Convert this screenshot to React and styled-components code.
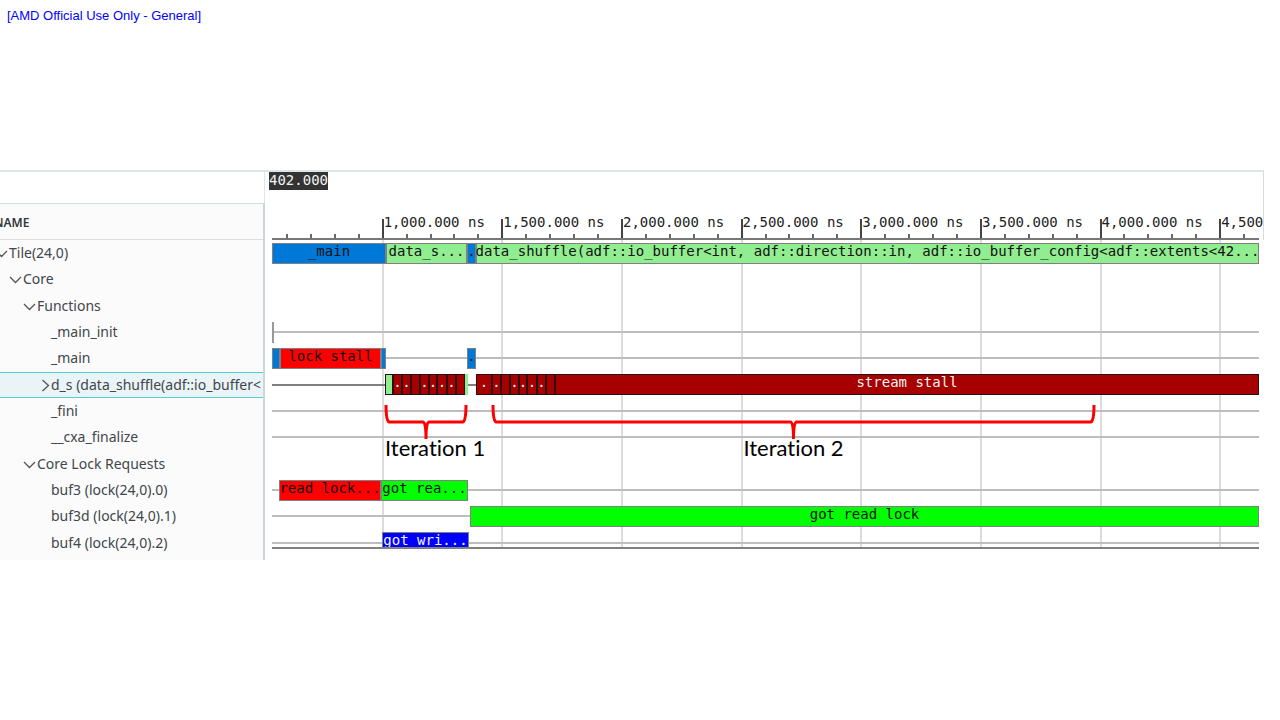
import React from "react";
import styled, { createGlobalStyle } from "styled-components";

const GlobalStyle = createGlobalStyle`
  *, *::before, *::after { box-sizing: border-box; }
  body {
    margin: 0;
    background: #fff;
    font-family: "Noto Sans", "Open Sans", sans-serif;
    color: #41464b;
  }
`;

const mono = `"DejaVu Sans Mono", "Liberation Mono", monospace`;

const colors = {
  blue: "#0078d7",
  mint: "#90ee90",
  red: "#ff0000",
  dark: "#a60000",
  green: "#00ff00",
  navy: "#0000ff",
  gray: "#999999",
};

const Page = styled.div`
  padding-right: 16px;
`;

const Notice = styled.p`
  margin: 0;
  padding: 8px 7px 0;
  height: 170px;
  font: 13px/16px "Liberation Sans", Arial, sans-serif;
  color: #0000ff;
`;

const Panel = styled.main`
  display: flex;
  overflow: hidden;
  border-top: 2px solid #dfe4e8;
`;

const Sidebar = styled.aside`
  flex: 0 0 265px;
  display: flex;
  flex-direction: column;
`;

const SidebarTop = styled.div`
  height: 31px;
  border-right: 1px solid #dfe4e8;
`;

const TreePane = styled.div`
  flex: 1;
  overflow: hidden;
  padding-bottom: 4px;
  border-top: 1px solid #d5dce1;
  border-right: 2px solid #cdd4da;
  background: #fbfbfb;
`;

const NameHeader = styled.h2`
  margin: 0 0 0 -6px;
  height: 36px;
  border-bottom: 1px solid #dcdfe1;
  font-size: 12px;
  font-weight: 600;
  line-height: 37px;
  color: #33373b;
`;

const Tree = styled.ul`
  margin: 0;
  padding: 0;
  height: 316px;
  display: grid;
  grid-auto-rows: 1fr;
  list-style: none;
`;

const TreeRow = styled.li`
  display: flex;
  align-items: center;
  margin-left: -5px;
  padding-left: ${(p) => p.$depth * 14}px;
  border: solid ${(p) => (p.$selected ? "#4fcfd6" : "transparent")};
  border-width: 1px 0;
  background: ${(p) => (p.$selected ? "#eaf4f6" : "transparent")};
  font-size: 14px;
  line-height: 20px;
  white-space: nowrap;
`;

const Twisty = styled.button`
  flex: 0 0 14px;
  height: 14px;
  padding: 0;
  border: 0;
  background: none;
  color: #50555a;

  svg {
    display: block;
  }
`;

const TwistySpace = styled.span`
  flex: 0 0 14px;
`;

const Chart = styled.section`
  flex: 1;
  min-width: 0;
  display: flex;
  flex-direction: column;
`;

const Ruler = styled.header`
  height: 68px;
  padding: 0 4px;
  border-right: 1px solid #d5dce1;
  overflow: hidden;
  display: flex;
  flex-direction: column;
  justify-content: space-between;
`;

const TimeBadge = styled.output`
  align-self: flex-start;
  padding-bottom: 2px;
  background: #333;
  font: 14px/16px ${mono};
  color: #f2f2f2;
`;

const Axis = styled.div`
  display: flex;
  height: 25px;
  margin-left: 3px;
  border-bottom: 2px solid #777;
`;

const AxisCell = styled.div`
  flex: ${(p) => p.$span} 1 0;
  min-width: 0;
  display: flex;
  flex-direction: column;
  justify-content: space-between;
  background: ${(p) =>
    p.$major ? "linear-gradient(#444, #444) left bottom / 2px 19px no-repeat" : "none"};
  font: 14px/14px ${mono};
  color: #222;
  white-space: nowrap;
`;

const AxisLabel = styled.span`
  height: 14px;
  padding-left: 2px;
`;

const MinorTicks = styled.div`
  display: flex;
  height: 4px;
`;

const Minor = styled.i`
  flex: ${(p) => p.$span} 1 0;
  box-shadow: ${(p) => (p.$tick ? "inset 2px 0 #666" : "none")};
`;

const Plot = styled.div`
  position: relative;
  margin: 0 5px 0 7px;
  height: 309px;
  border-bottom: 2px solid #808080;
  overflow: hidden;
`;

const GridLines = styled.div`
  position: absolute;
  inset: 0;
  display: flex;
`;

const GridCell = styled.i`
  flex: ${(p) => p.$span} 1 0;
  box-shadow: ${(p) => (p.$line ? "inset 2px 0 #dcdcdc" : "none")};
`;

const Lanes = styled.div`
  position: relative;
  height: 316px;
  display: grid;
  grid-auto-rows: 1fr;
`;

const Lane = styled.div`
  display: flex;
  align-items: center;
  min-width: 0;
  background: linear-gradient(${(p) => p.$line}, ${(p) => p.$line}) center / 100% 2px no-repeat;
`;

const Gap = styled.span`
  flex: ${(p) => p.$span} 1 0;
`;

const Bar = styled.span`
  flex: ${(p) => p.$span} 1 0;
  min-width: 0;
  height: 21px;
  padding-top: 1px;
  overflow: hidden;
  display: flex;
  justify-content: center;
  box-shadow: ${(p) => (p.$span < 4 ? "none" : `inset 0 0 0 1px ${p.$edge ? "#2a1010" : "#808080"}`)};
  background: ${(p) => colors[p.$fill]};
  color: ${(p) => (p.$fill === "dark" || p.$fill === "navy" ? "#f4f4f4" : "#111")};
  font: 14px/15px ${mono};
  white-space: pre;
`;

const Annotation = styled.figure`
  position: absolute;
  top: 165px;
  margin: 0;
  display: flex;
  flex-direction: column;
  align-items: ${(p) => p.$align};

  svg {
    display: block;
    width: 100%;
    height: 34px;
    overflow: visible;
  }
`;

const Caption = styled.figcaption`
  font: 22px/18px Lato, "Open Sans", sans-serif;
  font-variant-ligatures: none;
  color: #000;
  white-space: nowrap;
`;

const rows = [
  { label: "Tile(24,0)", depth: 0, open: true },
  { label: "Core", depth: 1, open: true },
  { label: "Functions", depth: 2, open: true },
  { label: "_main_init", depth: 3 },
  { label: "_main", depth: 3 },
  { label: "d_s (data_shuffle(adf::io_buffer<", depth: 3, open: false, selected: true },
  { label: "_fini", depth: 3 },
  { label: "__cxa_finalize", depth: 3 },
  { label: "Core Lock Requests", depth: 2, open: true },
  { label: "buf3 (lock(24,0).0)", depth: 3 },
  { label: "buf3d (lock(24,0).1)", depth: 3 },
  { label: "buf4 (lock(24,0).2)", depth: 3 },
];

// Every lane is 987 units long; a segment is [units, fill, text].
const TOTAL = 987;
const lanes = [
  {
    line: "transparent",
    segs: [
      [114, "blue", "_main"],
      [81, "mint", "data_s..."],
      [9, "blue", "."],
      [783, "mint", "data_shuffle(adf::io_buffer<int, adf::direction::in, adf::io_buffer_config<adf::extents<42..."],
    ],
  },
  { line: "transparent", segs: [] },
  { line: "transparent", segs: [] },
  { segs: [[2, "gray"], [985]] },
  { segs: [[8, "blue"], [101, "red", "lock stall"], [5, "blue"], [81], [9, "blue", "."], [783]] },
  {
    line: "#808080",
    edge: true,
    segs: [
      [113], [8, "mint"],
      [9, "dark", "."], [9, "dark", "."], [9, "dark"], [9, "dark", "."], [8, "dark", "."],
      [10, "dark", "."], [9, "dark", "."], [9, "dark"], [3, "mint"], [8],
      [16, "dark", "."], [9, "dark", "."], [9, "dark"], [9, "dark", "."], [8, "dark", "."],
      [10, "dark", "."], [9, "dark", "."], [9, "dark"],
      [704, "dark", "stream stall"],
    ],
  },
  { segs: [] },
  { segs: [] },
  { line: "transparent", segs: [] },
  { segs: [[7], [102, "red", "read lock..."], [87, "green", "got rea..."], [791]] },
  { segs: [[198], [789, "green", "got read lock"]] },
  { segs: [[110], [87, "navy", "got wri..."], [790]] },
];

const FIRST = 110;
const STEP = 120;
const times = ["1,000", "1,500", "2,000", "2,500", "3,000", "3,500", "4,000"];
const LAST = 40;

function Chevron({ open }) {
  return (
    <svg width="14" height="14" viewBox="0 0 14 14" fill="none" stroke="currentColor" strokeWidth="1.3">
      <path d={open ? "M1 5L6.5 10.5L12 5" : "M5.5 2L11.5 7.5L5.5 13"} />
    </svg>
  );
}

function Brace({ width }) {
  const mid = width / 2;
  return (
    <svg viewBox={`0 0 ${width} 34`} preserveAspectRatio="none" aria-hidden="true">
      <path
        d={`M1 0C1 8 2 16 4 17H${mid - 3}Q${mid} 17 ${mid} 34Q${mid} 17 ${mid + 3} 17H${width - 4}C${width - 2} 16 ${width - 1} 8 ${width - 1} 0`}
        fill="none"
        stroke="#ff0000"
        strokeWidth="3"
        vectorEffect="non-scaling-stroke"
      />
    </svg>
  );
}

function Annotated({ start, width, align, children }) {
  return (
    <Annotation
      $align={align}
      style={{ left: `${(start / TOTAL) * 100}%`, width: `${(width / TOTAL) * 100}%` }}
    >
      <Brace width={width} />
      <Caption>{children}</Caption>
    </Annotation>
  );
}

export default function App() {
  return (
    <Page>
      <GlobalStyle />
      <Notice>[AMD Official Use Only - General]</Notice>
      <Panel>
        <Sidebar>
          <SidebarTop />
          <TreePane>
            <NameHeader>NAME</NameHeader>
            <Tree>
              {rows.map((r) => (
                <TreeRow key={r.label} $depth={r.depth} $selected={r.selected}>
                  {r.open === undefined ? (
                    <TwistySpace />
                  ) : (
                    <Twisty type="button" aria-label={r.label} aria-expanded={r.open}>
                      <Chevron open={r.open} />
                    </Twisty>
                  )}
                  {r.label}
                </TreeRow>
              ))}
            </Tree>
          </TreePane>
        </Sidebar>
        <Chart>
          <Ruler>
            <TimeBadge>402.000</TimeBadge>
            <Axis>
              <AxisCell $span={FIRST}>
                <AxisLabel />
                <MinorTicks>
                  <Minor $span={14} />
                  {[0, 1, 2, 3].map((i) => (
                    <Minor key={i} $span={24} $tick />
                  ))}
                </MinorTicks>
              </AxisCell>
              {times.map((t) => (
                <AxisCell key={t} $span={STEP} $major>
                  <AxisLabel>{t}.000 ns</AxisLabel>
                  <MinorTicks>
                    <Minor $span={24} />
                    {[0, 1, 2, 3].map((i) => (
                      <Minor key={i} $span={24} $tick />
                    ))}
                  </MinorTicks>
                </AxisCell>
              ))}
              <AxisCell $span={LAST} $major>
                <AxisLabel>4,500</AxisLabel>
                <MinorTicks>
                  <Minor $span={24} />
                  <Minor $span={16} $tick />
                </MinorTicks>
              </AxisCell>
            </Axis>
          </Ruler>
          <Plot>
            <GridLines>
              <GridCell $span={FIRST} />
              {times.map((t) => (
                <GridCell key={t} $span={STEP} $line />
              ))}
              <GridCell $span={LAST} $line />
            </GridLines>
            <Lanes>
              {lanes.map((lane, i) => (
                <Lane key={i} $line={lane.line || "#bdbdbd"}>
                  {lane.segs.map(([span, fill, text], j) =>
                    fill ? (
                      <Bar key={j} $span={span} $fill={fill} $edge={lane.edge}>
                        {text}
                      </Bar>
                    ) : (
                      <Gap key={j} $span={span} />
                    )
                  )}
                </Lane>
              ))}
            </Lanes>
            <Annotated start={113} width={82} align="flex-start">
              Iteration 1
            </Annotated>
            <Annotated start={220} width={603} align="center">
              Iteration 2
            </Annotated>
          </Plot>
        </Chart>
      </Panel>
    </Page>
  );
}
